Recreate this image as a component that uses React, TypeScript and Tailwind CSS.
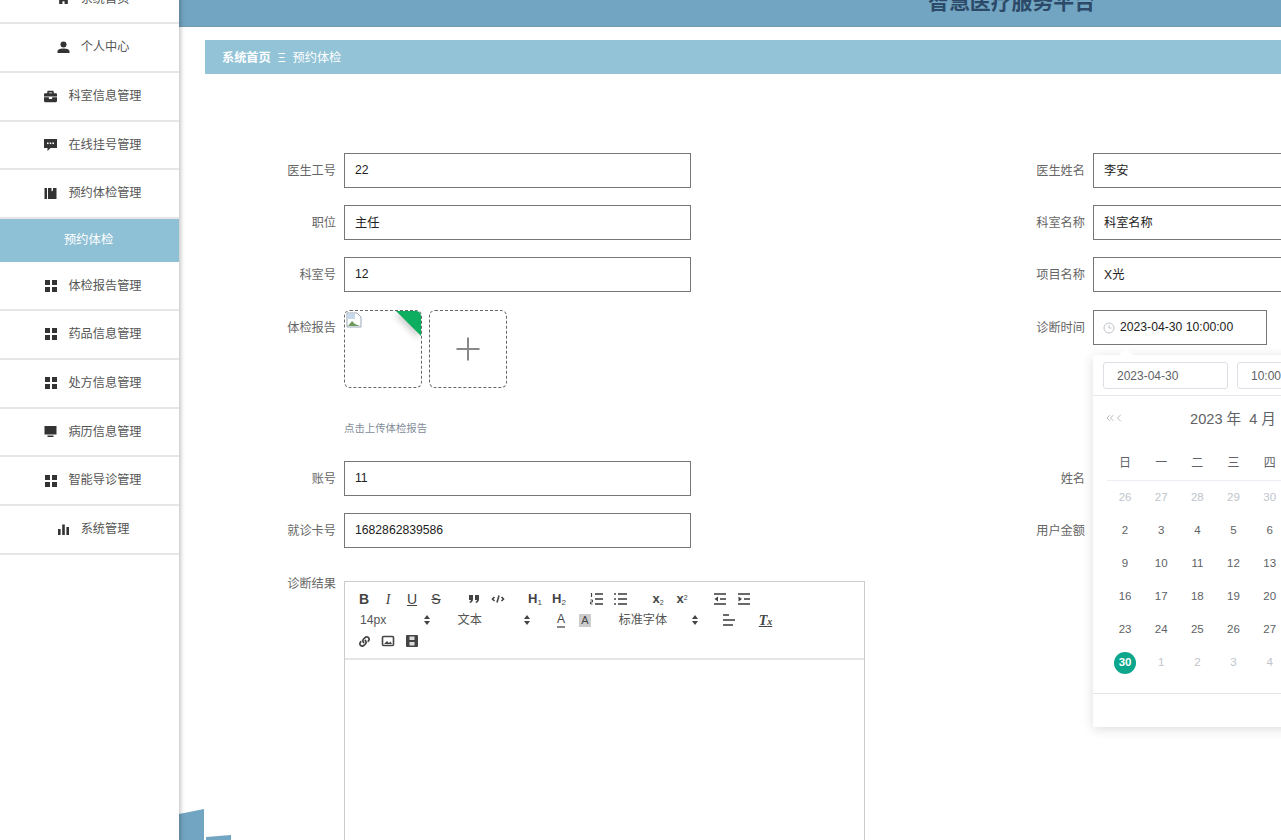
import React from 'react';
import { FaHome, FaBriefcase, FaLink } from 'react-icons/fa';
import { ChevronLeft, ChevronsLeft } from 'lucide-react';

const UserIcon = () => (
  <svg width="13" height="13" viewBox="0 0 13 13" fill="#333">
    <circle cx="6.5" cy="3.4" r="3" />
    <path d="M.5 12v-1.6c0-1.9 2-3 6-3s6 1.1 6 3V12z" />
  </svg>
);
const ChatIcon = () => (
  <svg width="13" height="13" viewBox="0 0 13 13">
    <path d="M0 1h13v9H6.5L3.5 13v-3H0z" fill="#333" />
    <rect x="3" y="4.5" width="1.6" height="1.6" fill="#fff" />
    <rect x="5.7" y="4.5" width="1.6" height="1.6" fill="#fff" />
    <rect x="8.4" y="4.5" width="1.6" height="1.6" fill="#fff" />
  </svg>
);
const BooksIcon = () => (
  <svg width="13" height="13" viewBox="0 0 13 13" fill="#333">
    <rect x="0.5" y="1" width="2.5" height="11" />
    <path d="M4 1h3.5v3.5L9 3.5V1h3.5v11H4z" />
  </svg>
);
const GridIcon = () => (
  <svg width="12" height="12" viewBox="0 0 12 12" fill="#333">
    <rect x="0" y="0" width="5" height="5" />
    <rect x="7" y="0" width="5" height="5" />
    <rect x="0" y="7" width="5" height="5" />
    <rect x="7" y="7" width="5" height="5" />
  </svg>
);
const MonitorIcon = () => (
  <svg width="13" height="13" viewBox="0 0 13 13" fill="#333">
    <rect x="0.5" y="1" width="12" height="8.5" />
    <rect x="3.5" y="10.5" width="6" height="1.5" />
  </svg>
);
const BarsIcon = () => (
  <svg width="13" height="13" viewBox="0 0 13 13" fill="#333">
    <rect x="1" y="6" width="2.6" height="6" />
    <rect x="5.2" y="1.5" width="2.6" height="10.5" />
    <rect x="9.4" y="4" width="2.6" height="8" />
  </svg>
);

const menu = [
  { label: '系统首页', icon: <FaHome size={14} color="#333" /> },
  { label: '个人中心', icon: <UserIcon /> },
  { label: '科室信息管理', icon: <FaBriefcase size={13} color="#333" /> },
  { label: '在线挂号管理', icon: <ChatIcon /> },
  { label: '预约体检管理', icon: <BooksIcon /> },
  { label: '预约体检', active: true },
  { label: '体检报告管理', icon: <GridIcon /> },
  { label: '药品信息管理', icon: <GridIcon /> },
  { label: '处方信息管理', icon: <GridIcon /> },
  { label: '病历信息管理', icon: <MonitorIcon /> },
  { label: '智能导诊管理', icon: <GridIcon /> },
  { label: '系统管理', icon: <BarsIcon /> },
];

function Sidebar() {
  return (
    <aside className="w-[179px] shrink-0 -mt-[24.5px] bg-white shadow-[2px_0_4px_rgba(0,0,0,0.22)] z-20 h-[900px]">
      {menu.map((item) =>
        item.active ? (
          <div key={item.label} className="h-[43.5px] pr-[2px] bg-[#8fc1d6] flex items-center justify-center text-white text-[12.4px]">
            {item.label}
          </div>
        ) : (
          <div key={item.label} className="h-[48.7px] pl-[7px] border-b-2 border-[#e6e6e6] flex items-center justify-center gap-[11px] text-[#555] text-[12.2px]">
            <span className="w-[13px] flex justify-center">{item.icon}</span>
            {item.label}
          </div>
        ),
      )}
    </aside>
  );
}

function TextField({ value }: { value: string }) {
  return (
    <input
      readOnly
      value={value}
      className="w-[347px] h-[35px] border border-[#767676] bg-white px-[10px] pb-[1px] text-[12.2px] text-[#222] outline-none"
    />
  );
}

function Field({ label, children }: { label: string; children?: React.ReactNode }) {
  return (
    <div className="w-[749px] shrink-0 flex items-start gap-2">
      <label className="w-[131px] h-[35px] leading-[36px] text-right text-[12.2px] text-[#666]">{label}</label>
      {children}
    </div>
  );
}

const stroke = { fill: 'none', stroke: '#444', strokeWidth: 1.6 };

const QuoteIcon = () => (
  <svg width="18" height="18" viewBox="0 0 18 18" fill="#444">
    <path d="M4 5h4v4c0 2-1 3.5-3 4l-.6-1.2c1-.4 1.5-1 1.6-1.8H4z" />
    <path d="M10 5h4v4c0 2-1 3.5-3 4l-.6-1.2c1-.4 1.5-1 1.6-1.8H10z" />
  </svg>
);
const CodeIcon = () => (
  <svg width="18" height="18" viewBox="0 0 18 18" {...stroke}>
    <polyline points="5.5 7 3.5 9 5.5 11" />
    <polyline points="12.5 7 14.5 9 12.5 11" />
    <line x1="10" y1="5.5" x2="8" y2="12.5" />
  </svg>
);
const OrderedIcon = () => (
  <svg width="18" height="18" viewBox="0 0 18 18" {...stroke}>
    <line x1="7" y1="4" x2="15" y2="4" />
    <line x1="7" y1="9" x2="15" y2="9" />
    <line x1="7" y1="14" x2="15" y2="14" />
    <line x1="3.5" y1="3" x2="3.5" y2="7" strokeWidth="1.2" />
    <path d="M2.5 10h2v2h-2v2h2" strokeWidth="1" />
  </svg>
);
const BulletIcon = () => (
  <svg width="18" height="18" viewBox="0 0 18 18" {...stroke}>
    <line x1="6" y1="4" x2="15" y2="4" />
    <line x1="6" y1="9" x2="15" y2="9" />
    <line x1="6" y1="14" x2="15" y2="14" />
    <line x1="3" y1="4" x2="3" y2="4" strokeLinecap="round" strokeWidth="2" />
    <line x1="3" y1="9" x2="3" y2="9" strokeLinecap="round" strokeWidth="2" />
    <line x1="3" y1="14" x2="3" y2="14" strokeLinecap="round" strokeWidth="2" />
  </svg>
);
const IndentIcon = ({ out }: { out?: boolean }) => (
  <svg width="18" height="18" viewBox="0 0 18 18" {...stroke}>
    <line x1="3" y1="4" x2="15" y2="4" />
    <line x1="3" y1="14" x2="15" y2="14" />
    <line x1="9" y1="9" x2="15" y2="9" />
    <polygon points={out ? '7 6.5 3.5 9 7 11.5' : '3.5 6.5 7 9 3.5 11.5'} fill="#444" stroke="none" />
  </svg>
);
const AlignIcon = () => (
  <svg width="18" height="18" viewBox="0 0 18 18" {...stroke}>
    <line x1="3" y1="9" x2="15" y2="9" />
    <line x1="3" y1="14" x2="13" y2="14" />
    <line x1="3" y1="4" x2="9" y2="4" />
  </svg>
);
const ImageIcon = () => (
  <svg width="18" height="18" viewBox="0 0 18 18">
    <rect x="3.5" y="4.5" width="11" height="9" rx="1" fill="none" stroke="#444" strokeWidth="1.6" />
    <path d="M5 12l3-3 2 2 1.5-1.5 1.5 2.5z" fill="#444" />
  </svg>
);
const VideoIcon = () => (
  <svg width="18" height="18" viewBox="0 0 18 18">
    <rect x="3" y="3" width="12" height="12" rx="1" fill="#444" />
    <rect x="6.5" y="4.5" width="5" height="3.5" fill="#ddd" />
    <rect x="6.5" y="10" width="5" height="3.5" fill="#ddd" />
  </svg>
);
const Arrows = () => (
  <svg width="8" height="12" viewBox="0 0 8 12" fill="#444">
    <polygon points="4 1 7 5 1 5" />
    <polygon points="4 11 7 7 1 7" />
  </svg>
);

function Btn({ children }: { children?: React.ReactNode }) {
  return <span className="w-[24px] h-[20px] shrink-0 flex items-center justify-center text-[#444]">{children}</span>;
}

function Pick({ width, text }: { width: string; text: string }) {
  return (
    <span className={`${width} h-[20px] shrink-0 pl-2 pr-[5px] flex items-center justify-between text-[12.2px] text-[#555]`}>
      {text}
      <Arrows />
    </span>
  );
}

function Editor() {
  return (
    <div className="mt-[15px] w-[521px] h-[400px] border border-[#ccc] shrink-0">
      <div className="h-[78px] pl-[7px] pt-[7px] border-b-2 border-[#e5e5e5] flex flex-col gap-[1px]">
        <div className="flex items-center gap-[13.5px]">
          <div className="flex">
            <Btn><span className="text-[14px] font-semibold">B</span></Btn>
            <Btn><i className="text-[14px] font-['Liberation_Serif',serif]">I</i></Btn>
            <Btn><span className="text-[14px] underline">U</span></Btn>
            <Btn><span className="text-[14px] line-through">S</span></Btn>
          </div>
          <div className="flex">
            <Btn><QuoteIcon /></Btn>
            <Btn><CodeIcon /></Btn>
          </div>
          <div className="flex">
            <Btn><span className="text-[13px] font-semibold">H<sub className="text-[8px] font-normal">1</sub></span></Btn>
            <Btn><span className="text-[13px] font-semibold">H<sub className="text-[8px] font-normal">2</sub></span></Btn>
          </div>
          <div className="flex">
            <Btn><OrderedIcon /></Btn>
            <Btn><BulletIcon /></Btn>
          </div>
          <div className="flex">
            <Btn><span className="text-[13px] font-semibold">x<sub className="text-[7px] font-normal">2</sub></span></Btn>
            <Btn><span className="text-[13px] font-semibold">x<sup className="text-[7px] font-normal">2</sup></span></Btn>
          </div>
          <div className="flex">
            <Btn><IndentIcon out /></Btn>
            <Btn><IndentIcon /></Btn>
          </div>
        </div>
        <div className="flex items-center gap-[13.5px]">
          <Pick width="w-[84px]" text="14px" />
          <Pick width="w-[86px]" text="文本" />
          <div className="flex">
            <Btn><span className="text-[12px] border-b-2 border-[#888] leading-[13px]">A</span></Btn>
            <Btn><span className="text-[11px] bg-[#ccc] px-[2px] leading-[13px]">A</span></Btn>
          </div>
          <Pick width="w-[93px]" text="标准字体" />
          <Btn><AlignIcon /></Btn>
          <span className="-ml-[1px]">
            <Btn><i className="text-[14px] font-bold font-['Liberation_Serif',serif] underline">T<span className="text-[10px]">x</span></i></Btn>
          </span>
        </div>
        <div className="flex items-center">
          <Btn><FaLink size={11} color="#444" /></Btn>
          <Btn><ImageIcon /></Btn>
          <Btn><VideoIcon /></Btn>
        </div>
      </div>
    </div>
  );
}

function Upload() {
  return (
    <div>
      <div className="flex gap-[7px]">
        <div className="relative w-[78px] h-[78px] rounded-[6px] border border-dashed border-[#666] overflow-hidden bg-white">
          <svg width="16" height="16" viewBox="0 0 16 16" className="absolute left-[1px] top-[1px]">
            <path d="M1 1h10l4 4v10H1z" fill="#fff" stroke="#9aa7b5" />
            <path d="M2 14l4-5 3 3 5 2z" fill="#6f9a5b" />
            <path d="M2 2h7v5H2z" fill="#c6d8ec" />
          </svg>
          <div className="absolute right-0 top-0 w-0 h-0 border-t-[25px] border-l-[25px] border-t-[#0dae5f] border-l-transparent drop-shadow-[-2px_3px_3px_rgba(0,0,0,0.2)]" />
        </div>
        <div className="w-[78px] h-[78px] rounded-[6px] border border-dashed border-[#666] flex items-center justify-center">
          <svg width="26" height="26" viewBox="0 0 26 26" stroke="#888" strokeWidth="2">
            <line x1="13" y1="1.5" x2="13" y2="24.5" />
            <line x1="1.5" y1="13" x2="24.5" y2="13" />
          </svg>
        </div>
      </div>
      <p className="mt-[33px] text-[10.4px] leading-[15px] text-[#7f8c99]">点击上传体检报告</p>
    </div>
  );
}

const weeks = ['日', '一', '二', '三', '四', '五', '六'];
const prevDays = ['26', '27', '28', '29', '30', '31'];

function DatePopup() {
  const rows: { d: number; muted?: boolean; sel?: boolean }[][] = [];
  const first = [...prevDays.map((d) => ({ d: Number(d), muted: true })), { d: 1 }];
  rows.push(first);
  for (let w = 0; w < 4; w++) {
    rows.push(Array.from({ length: 7 }, (_, i) => ({ d: 2 + w * 7 + i })));
  }
  rows.push([{ d: 30, sel: true }, ...Array.from({ length: 6 }, (_, i) => ({ d: i + 1, muted: true }))]);

  return (
    <div className="absolute left-0 top-[45px] z-10 w-[280px] h-[372px] rounded-[2px] bg-white shadow-[0_2px_12px_rgba(0,0,0,0.14)]">
      <div className="absolute left-[28px] -top-[5px] w-[10px] h-[10px] rotate-45 bg-white" />
      <div className="h-[41px] pl-[10px] pt-[7px] flex gap-[9px] border-b border-[#e4e7ed]">
        <input readOnly value="2023-04-30" className="w-[125px] h-[27px] px-[13px] rounded-[3px] border border-[#dcdfe6] text-[12px] text-[#606266] outline-none" />
        <input readOnly value="10:00:00" className="w-[125px] h-[27px] px-[13px] rounded-[3px] border border-[#dcdfe6] text-[12px] text-[#606266] outline-none" />
      </div>
      <div className="h-[48px] flex items-center justify-center relative text-[14.6px] text-[#606266] gap-[8px]">
        <span>2023 年</span>
        <span>4 月</span>
        <div className="absolute left-[11px] top-[16px] flex text-[#888]">
          <ChevronsLeft size={12} strokeWidth={1.2} />
          <ChevronLeft size={12} strokeWidth={1.2} className="-ml-[3px]" />
        </div>
      </div>
      <div className="ml-[14px] w-[253px]">
        <div className="grid grid-cols-7 h-[37px] pt-[1px] items-center border-b border-[#ebeef5] text-[12px] text-[#606266] text-center">
          {weeks.map((w) => (
            <span key={w}>{w}</span>
          ))}
        </div>
        {rows.map((row, i) => (
          <div key={i} className="grid grid-cols-7 h-[33px] items-center text-center text-[11.5px]">
            {row.map((c, j) => (
              <span key={j} className={c.muted ? 'text-[#c0c4cc]' : 'text-[#606266]'}>
                {c.sel ? (
                  <span className="mx-auto w-[22px] h-[22px] rounded-full bg-[#0ca68c] text-white font-bold flex items-center justify-center">{c.d}</span>
                ) : (
                  c.d
                )}
              </span>
            ))}
          </div>
        ))}
      </div>
      <div className="mt-[14px] h-[33px] border-t border-[#e4e4e4]" />
    </div>
  );
}

function ClockIcon() {
  return (
    <svg width="12" height="12" viewBox="0 0 12 12" fill="none" stroke="#c0c4cc">
      <circle cx="6" cy="6" r="5" />
      <path d="M6 3v3h2.5" />
    </svg>
  );
}

export default function App() {
  return (
    <div className="relative h-[840px] overflow-hidden flex bg-white font-['Liberation_Sans','Noto_Sans_CJK_SC',sans-serif]">
      <Sidebar />

      <main className="relative flex-1 min-w-0 overflow-hidden">
        {/* header is scrolled most of the way out */}
        <header className="h-[27px] bg-[#72a5c2] border-b border-[#6f9ab3] overflow-hidden flex items-end pl-[749px] pb-[14px]">
          <h1 className="text-[20.9px] leading-[21px] font-bold text-[#2c4a68] whitespace-nowrap">智慧医疗服务平台</h1>
        </header>

        <div className="mt-[13px] ml-[26px] h-[33.5px] bg-[#92c3d7] pl-[17px] pt-[2px] flex items-center text-[12.2px] text-white">
          <b>系统首页</b>
          <span className="mx-[7px] text-[12px]">Ξ</span>
          <span>预约体检</span>
        </div>

        <form className="mt-[79.5px] ml-[26px] flex flex-col w-[1500px]">
          <div className="flex mb-[17px]">
            <Field label="医生工号"><TextField value="22" /></Field>
            <Field label="医生姓名"><TextField value="李安" /></Field>
          </div>
          <div className="flex mb-[17px]">
            <Field label="职位"><TextField value="主任" /></Field>
            <Field label="科室名称"><TextField value="科室名称" /></Field>
          </div>
          <div className="flex mb-[18px]">
            <Field label="科室号"><TextField value="12" /></Field>
            <Field label="项目名称"><TextField value="X光" /></Field>
          </div>
          <div className="flex h-[151px]">
            <Field label="体检报告"><Upload /></Field>
            <Field label="诊断时间">
              <div className="relative">
                <div className="w-[174px] h-[35px] border border-[#767676] bg-white pl-[9px] flex items-center gap-[5px] text-[12.2px] text-[#222]">
                  <ClockIcon />
                  2023-04-30 10:00:00
                </div>
                <DatePopup />
              </div>
            </Field>
          </div>
          <div className="flex mb-[17px]">
            <Field label="账号"><TextField value="11" /></Field>
            <Field label="姓名"><TextField value="" /></Field>
          </div>
          <div className="flex mb-[18px]">
            <Field label="就诊卡号"><TextField value="1682862839586" /></Field>
            <Field label="用户金额"><TextField value="" /></Field>
          </div>
          <div className="flex">
            <Field label="诊断结果"><Editor /></Field>
          </div>
        </form>

        <svg width="52" height="31" viewBox="0 0 52 31" fill="#72a5c2" className="absolute left-0 bottom-0">
          <polygon points="0,5 25,0 25,31 0,31" />
          <polygon points="27,31 27,28 52,26 52,31" />
        </svg>
      </main>
    </div>
  );
}
